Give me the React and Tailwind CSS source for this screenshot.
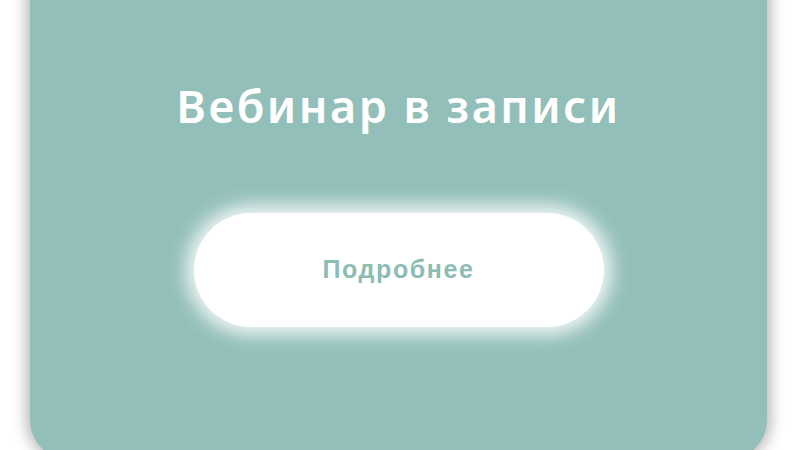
export default function App() {
  return (
    <div className="w-[800px] h-[450px] overflow-hidden bg-white">
      <div className="ml-[30px] w-[737px] h-[540px] -mt-[80px] rounded-[40px] bg-[#93bfba] shadow-[0_0_14px_4px_rgba(60,50,55,0.35)] flex flex-col items-center pt-[6px]">
        <h2 className="text-white text-[56px] leading-[72px] font-medium font-['Noto_Sans',sans-serif]">
          Курс практикум
        </h2>
        <h1 className="mt-[80px] text-white text-[45px] leading-[56px] font-semibold tracking-[2.5px] font-['Noto_Sans',sans-serif]">
          Вебинар в записи
        </h1>
        <button className="mt-[79px] w-[410px] h-[114px] rounded-full bg-white shadow-[0_0_18px_8px_rgba(255,255,255,0.85)] text-[#8cbcb4] text-[25px] font-bold tracking-[1.6px] font-['Liberation_Sans',sans-serif]">
          Подробнее
        </button>
      </div>
    </div>
  )
}
